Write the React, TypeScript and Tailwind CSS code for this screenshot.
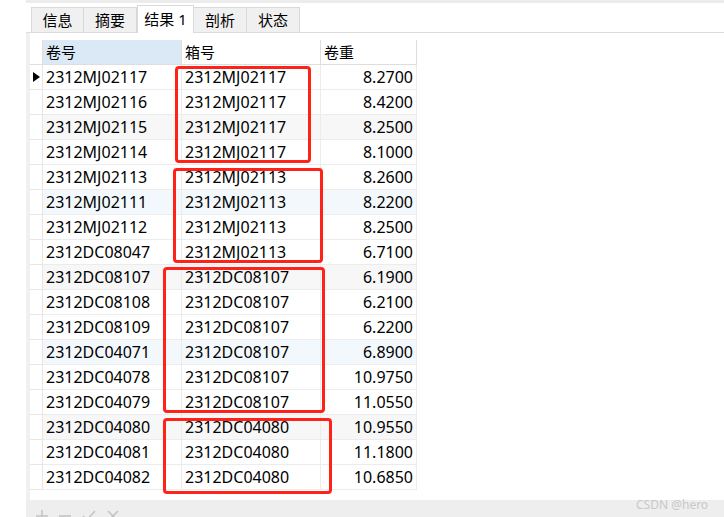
import React from "react";

const rows: [string, string, string][] = [
  ["2312MJ02117", "2312MJ02117", "8.2700"],
  ["2312MJ02116", "2312MJ02117", "8.4200"],
  ["2312MJ02115", "2312MJ02117", "8.2500"],
  ["2312MJ02114", "2312MJ02117", "8.1000"],
  ["2312MJ02113", "2312MJ02113", "8.2600"],
  ["2312MJ02111", "2312MJ02113", "8.2200"],
  ["2312MJ02112", "2312MJ02113", "8.2500"],
  ["2312DC08047", "2312MJ02113", "6.7100"],
  ["2312DC08107", "2312DC08107", "6.1900"],
  ["2312DC08108", "2312DC08107", "6.2100"],
  ["2312DC08109", "2312DC08107", "6.2200"],
  ["2312DC04071", "2312DC08107", "6.8900"],
  ["2312DC04078", "2312DC08107", "10.9750"],
  ["2312DC04079", "2312DC08107", "11.0550"],
  ["2312DC04080", "2312DC04080", "10.9550"],
  ["2312DC04081", "2312DC04080", "11.1800"],
  ["2312DC04082", "2312DC04080", "10.6850"],
];

const tabs = ["信息", "摘要", "结果 1", "剖析", "状态"];

function rowBg(i: number) {
  if (i % 3 !== 2) return "bg-white";
  return (i / 3) % 2 < 1 ? "bg-[#f7f7f7]" : "bg-[#f3f8fd]";
}

export default function App() {
  return (
    <div
      className="relative flex h-[517px] w-[724px] overflow-hidden bg-white text-black"
      style={{ fontFamily: '"Noto Sans", "Noto Sans CJK SC", sans-serif' }}
    >
      {/* blank strip on the left */}
      <div className="w-[26px] shrink-0 bg-white" />

      <div className="flex flex-1 flex-col">
        {/* top band */}
        <div className="h-[3px] bg-[#ececec]" />

        {/* tabs */}
        <div className="flex h-[30px] items-end border-b border-[#dcdcdc] pl-[5px]">
          {tabs.map((t, i) =>
            i === 2 ? (
              <div
                key={t}
                className="-mb-px flex h-[28px] w-[57px] items-start justify-center border border-b-0 border-[#d9d9d9] bg-white pt-[2px] text-[15px] leading-[22px]"
              >
                {t}
              </div>
            ) : (
              <div
                key={t}
                className="flex h-[25px] w-[53px] items-center justify-center border border-b-0 border-l-0 border-[#d9d9d9] bg-[#f0f0f0] text-[15px] first:border-l"
              >
                {t}
              </div>
            )
          )}
        </div>

        {/* grid area */}
        <div className="flex flex-1">
          <div className="w-[4px] bg-[#f0f0f0]" />
          <div className="flex-1 pt-[7px]">
            <div className="grid w-[387px] grid-cols-[13px_139px_139px_96px] text-[16px]">
              {/* header */}
              <div className="h-[25px] border-r border-b border-[#dedede] bg-white" />
              <div className="flex h-[25px] items-center border-r border-b border-[#dedede] bg-[#dbe9f7] pl-[3px] text-[15px]">
                卷号
              </div>
              <div className="flex h-[25px] items-center border-r border-b border-[#dedede] bg-white pl-[3px] text-[15px]">
                箱号
              </div>
              <div className="flex h-[25px] items-center border-r border-b border-[#dedede] bg-white pl-[3px] text-[15px]">
                卷重
              </div>

              {rows.map((r, i) => (
                <React.Fragment key={i}>
                  <div className="flex h-[25px] items-center justify-center border-r border-b border-[#e6e6e6] bg-white">
                    {i === 0 && (
                      <svg width="7" height="10" viewBox="0 0 7 10">
                        <path d="M0 0 L7 5 L0 10 Z" fill="#000" />
                      </svg>
                    )}
                  </div>
                  <div className={`flex h-[25px] items-center border-r border-b border-[#ececec] pl-[3px] ${rowBg(i)}`}>
                    {r[0]}
                  </div>
                  <div className={`flex h-[25px] items-center border-r border-b border-[#ececec] pl-[3px] ${rowBg(i)}`}>
                    {r[1]}
                  </div>
                  <div className={`flex h-[25px] items-center justify-end border-r border-b border-[#ececec] pr-[3px] ${rowBg(i)}`}>
                    {r[2]}
                  </div>
                </React.Fragment>
              ))}
            </div>
          </div>
        </div>

        {/* bottom toolbar */}
        <div className="flex h-[17px] items-start gap-[11px] bg-[#eeeeee] pl-[10px] pt-[10px] text-[#c4c4c4]">
          <svg width="12" height="12" viewBox="0 0 12 12" stroke="currentColor" strokeWidth="1.6">
            <path d="M6 0 V12 M0 6 H12" />
          </svg>
          <svg width="12" height="12" viewBox="0 0 12 12" stroke="currentColor" strokeWidth="1.6">
            <path d="M0 6 H12" />
          </svg>
          <svg width="14" height="12" viewBox="0 0 14 12" stroke="currentColor" strokeWidth="1.6" fill="none">
            <path d="M1 6 L5 10 L13 1" />
          </svg>
          <svg width="12" height="12" viewBox="0 0 12 12" stroke="currentColor" strokeWidth="1.6">
            <path d="M1 1 L11 11 M11 1 L1 11" />
          </svg>
        </div>
      </div>

      {/* red annotation boxes */}
      <div className="absolute left-[175px] top-[66px] h-[97px] w-[136px] rounded-[4px] border-[3px] border-[#ff2218]" />
      <div className="absolute left-[173px] top-[168px] h-[95px] w-[150px] rounded-[4px] border-[3px] border-[#ff2218]" />
      <div className="absolute left-[163px] top-[267px] h-[146px] w-[162px] rounded-[4px] border-[3px] border-[#ff2218]" />
      <div className="absolute left-[163px] top-[418px] h-[76px] w-[169px] rounded-[4px] border-[3px] border-[#ff2218]" />

      {/* watermark */}
      <div className="absolute left-[636px] top-[497px] text-[12px] leading-[16px] text-[#c8c8c8]">
        CSDN @hero
      </div>
    </div>
  );
}
